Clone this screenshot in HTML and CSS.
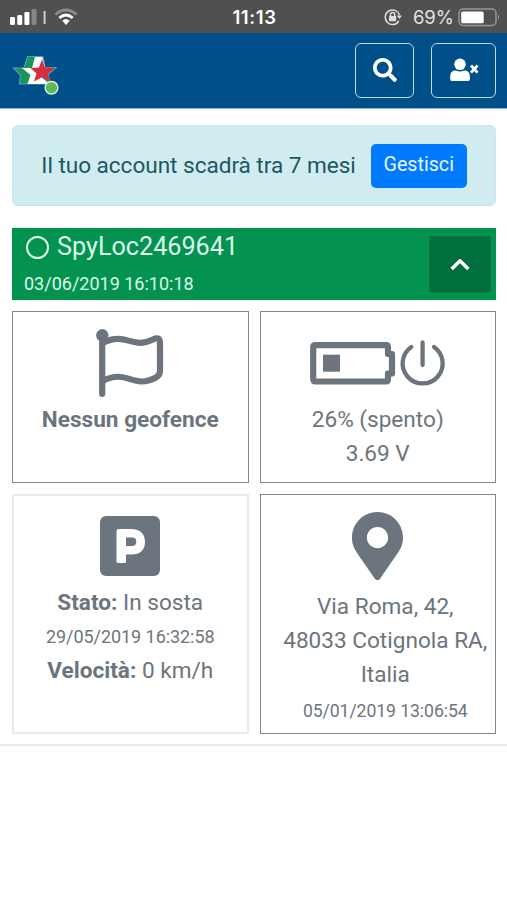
FILE: index.html
```html
<!DOCTYPE html>
<html lang="it">
<head>
<meta charset="utf-8">
<meta name="viewport" content="width=device-width, initial-scale=1">
<title>SpyLoc</title>
<link rel="stylesheet" href="styles.css">
</head>
<body>
<div class="status">
  <svg class="signal" width="68" height="18" viewBox="0 0 68 18" fill="#fff">
    <rect x="0" y="9" width="5" height="8" rx="1.2"/><rect x="7.2" y="7" width="5" height="10" rx="1.2"/><rect x="14.4" y="4" width="5" height="13" rx="1.2"/><rect x="21.6" y="1" width="5" height="16" rx="1.2" fill="#858585"/>
    <rect x="33.6" y="3" width="2" height="13" fill="#ccc"/>
    <g fill="none" stroke-width="2.8"><path d="M45.5 6.5Q56 -2.5 66.500 6.500" stroke="#8c8c8c"/><path d="M49.300 10Q56 4 62.700 10" stroke="#fff"/></g>
    <path d="M52.300 12.700Q56 9.500 59.700 12.700L56 17Z"/>
  </svg>
  <span class="clock">11:13</span>
  <div class="status-right">
    <svg width="19" height="18" viewBox="0 0 19 18" fill="none" stroke="#ddd" stroke-width="1.500"><path d="M14.800 13A7.300 7.300 0 1 1 15.500 7"/><path d="M12.800 7.500H18L15.500 11Z" fill="#ddd" stroke="none"/><rect x="5" y="8" width="7.200" height="5.200" rx=".6" fill="#ddd" stroke="none"/><path d="M6.500 8V6.500a2.100 2.100 0 0 1 4.200 0V8"/></svg>
    <span class="percent">69%</span>
    <svg width="43" height="19" viewBox="0 0 43 19"><rect x="1" y="1" width="37" height="16.500" rx="4" fill="none" stroke="#969696" stroke-width="1.500"/><rect x="3.200" y="3.400" width="22.500" height="11.800" rx="1.500" fill="#fff"/><path d="M40 6.500q2.500 2.700 0 5.500z" fill="#969696"/></svg>
  </div>
</div>
<header class="navbar">
  <svg class="logo" width="48" height="44" viewBox="0 0 48 44">
    <path d="M15.500 3.500H30.800L33 14.500H44L36 21.500L38.500 31H7.500L8.500 22L1.500 15H12Z" fill="#16965b" stroke="#5a9cb1" stroke-width="1.200"/>
    <path d="M23 4H30.300L33 14L25 31H15.500L18.500 22L10 15H20Z" fill="#fff"/>
    <path d="M29 24L38 31H22Z" fill="#fff"/>
    <path d="M30 6.300L33 14.500L43 15L35.700 20.500L38 28.500L30 24.300L22 28.500L24.500 20.500L18.500 15L27 14.500Z" fill="#d92b42"/>
    <circle cx="39.500" cy="34.700" r="6.400" fill="#5cba57" stroke="#e9f5ed" stroke-width="1.300"/>
  </svg>
  <div class="nav-actions">
    <button class="nav-btn search" aria-label="Cerca"><svg width="24" height="24" viewBox="0 0 512 512" fill="#fff"><path d="M505 442.700L405.300 343c-4.500-4.500-10.600-7-17-7H372c27.600-35.300 44-79.700 44-128C416 93.100 322.900 0 208 0S0 93.100 0 208s93.100 208 208 208c48.300 0 92.700-16.400 128-44v16.300c0 6.400 2.500 12.500 7 17l99.700 99.700c9.400 9.400 24.600 9.400 33.900 0l28.300-28.300c9.400-9.400 9.400-24.600.1-34zM208 336c-70.700 0-128-57.200-128-128 0-70.700 57.200-128 128-128 70.700 0 128 57.200 128 128 0 70.700-57.200 128-128 128z"/></svg></button>
    <button class="nav-btn user" aria-label="Esci"><svg width="30" height="24" viewBox="0 0 30 24" fill="#fff"><circle cx="11" cy="6.300" r="5.800"/><path d="M1.200 21V18.500Q1.200 12.600 7 12.600Q11 14.600 15 12.600Q20.900 12.600 20.900 18.500V21Q20.900 23 19 23H3Q1.200 23 1.200 21Z"/><path d="M22 7.500L28.500 14.700M28.500 7.500L22 14.700" stroke="#fff" stroke-width="2.700"/></svg></button>
  </div>
</header>
<main>
  <section class="alert"><span>Il tuo account scadrà tra 7 mesi</span><button class="manage">Gestisci</button></section>
  <section class="device">
    <div class="device-info">
      <h1><i class="ring"></i>SpyLoc2469641</h1>
      <p>03/06/2019 16:10:18</p>
    </div>
    <button class="toggle" aria-label="Comprimi"><svg width="20" height="13" viewBox="0 0 20 13" fill="none" stroke="#fff" stroke-width="3.400"><path d="M1.700 11L10 2.800L18.300 11" stroke-linejoin="round"/></svg></button>
  </section>
  <section class="cards">
    <article class="card">
      <div class="icon flag"><svg width="68" height="68" viewBox="0 0 68 68"><circle cx="6.300" cy="6.300" r="6.200" fill="#6c757d"/><path d="M6.200 6V65" stroke="#6c757d" stroke-width="6.200" stroke-linecap="round"/><path d="M6.300 14C31 2 35 21 57 10.500Q64 7 64 14V42Q64 46 60 48.500C36 61 32 39 6.300 52" fill="none" stroke="#6c757d" stroke-width="6.200"/></svg></div>
      <b>Nessun geofence</b>
    </article>
    <article class="card">
      <div class="icon battery"><svg width="136" height="47" viewBox="0 0 136 47" fill="none" stroke="#6c757d"><path d="M5.500 5.200H76Q78 5.200 78 7.500V14H82V33.500H78V39Q78 41.500 76 41.500H5.500Q3.200 41.500 3.200 39V7.500Q3.200 5.200 5.500 5.200Z" stroke-width="6.200" stroke-linejoin="round"/><path d="M13 14.700h17v17h-17z" fill="#6c757d" stroke="none"/><path d="M101.300 7A20 20 0 1 0 124 7M112.600 2.500V25" stroke-width="4.300" stroke-linecap="round"/></svg></div>
      <span>26% (spento)</span>
      <span>3.69 V</span>
    </article>
    <article class="card muted">
      <div class="icon parking"><svg width="60" height="60" viewBox="0 0 60 60"><rect width="60" height="60" rx="6" fill="#6c757d"/><path fill-rule="evenodd" d="M18.500 13H31.500C40 13 45 18 45 26S40 38.500 31.500 38.500H26V45.500Q26 47 24.500 47H18Q16.500 47 16.500 45.500V15Q16.500 13 18.500 13ZM26 21.500V30H32Q36.300 30 36.300 25.700Q36.300 21.500 32 21.500Z" fill="#fff"/></svg></div>
      <span><b>Stato:</b> In sosta</span>
      <small>29/05/2019 16:32:58</small>
      <span><b>Velocità:</b> 0 km/h</span>
    </article>
    <article class="card address">
      <div class="icon pin"><svg width="51" height="68" viewBox="0 0 384 512" fill="#6c757d"><path d="M172.268 501.670C26.970 291.031 0 269.413 0 192 0 85.961 85.961 0 192 0s192 85.961 192 192c0 77.413-26.970 99.031-172.268 309.670-9.535 13.774-29.930 13.773-39.464 0zM192 272c44.183 0 80-35.817 80-80s-35.817-80-80-80-80 35.817-80 80 35.817 80 80 80z"/></svg></div>
      <span>Via Roma, 42,<br>48033 Cotignola RA,<br>Italia</span>
      <small>05/01/2019 13:06:54</small>
    </article>
  </section>
</main>
</body>
</html>
```

FILE: styles.css
```css
* { box-sizing: border-box; }
body { margin: 0; background: #fff; font-family: Roboto, sans-serif; font-size: 22.6px; line-height: 34.2px; color: #6c757d; }
button { font: inherit; padding: 0; display: flex; align-items: center; justify-content: center; }
svg { display: block; flex: none; }
.status { height: 33px; background: #505050; display: grid; grid-template-columns: 1fr auto 1fr; align-items: center; padding: 1px 8px 0 10px; color: #fff; font-family: Inter, sans-serif; font-size: 18.5px; line-height: 32px; }
.clock { font-weight: 600; letter-spacing: .6px; }
.status-right { display: flex; justify-content: flex-end; align-items: center; }
.percent { color: #e2e2e2; margin: 0 4px 0 10px; }
.status-right { margin-right: -2px; }
.navbar { height: 76px; background: #004f89; border-bottom: 1px solid #8fb1ca; display: flex; justify-content: space-between; padding: 10px 11px 0 12px; }
.logo { margin-top: 10px; }
.nav-actions { display: flex; gap: 17px; }
.nav-btn { height: 55px; background: transparent; border: 1.500px solid #b9dcf4; border-radius: 6px; }
.search { width: 59px; padding-bottom: 2px; }
.user { width: 65px; padding-bottom: 2px; }
main { padding: 16px 11px 0 12px; border-bottom: 2px solid #e9eaec; height: 637px; }
.alert { height: 81px; border: 1px solid #c5e8ed; border-radius: 6px; background: #d0ecf0; color: #1c5862; display: flex; align-items: center; justify-content: center; gap: 15px; }
.alert span { padding-top: 2px; letter-spacing: -.04px; }
.manage { width: 96px; height: 44px; background: #007bff; border: 0; border-radius: 5px; color: #e8f4ff; font-size: 19.700px; }
.device { margin-top: 22px; height: 72px; background: #049251; color: #dcf8e9; display: flex; justify-content: space-between; }
.device-info { padding: 4px 0 0 12px; }
h1 { margin: 0; font-size: 25.200px; font-weight: 400; line-height: 30px; display: flex; align-items: center; }
.ring { width: 23px; height: 23px; border: 2.500px solid #dcf8e9; border-radius: 50%; margin: 0 8px 0 2px; }
.device p { margin: 8px 0 0; font-size: 18px; line-height: 27px; }
.toggle { width: 62px; height: 57px; margin: 8px 5px 0 0; background: #006f3d; border: 1px solid #087945; border-radius: 2px; }
.cards { margin-top: 11px; display: grid; grid-template-columns: 1fr 1fr; grid-template-rows: 172px 240px; gap: 11px; }
.card { border: 1.500px solid #7f8588; display: flex; flex-direction: column; align-items: center; text-align: center; white-space: nowrap; }
.muted { border: 2px solid #e9eaec; }
.icon { height: 91px; display: flex; flex: none; }
.flag { padding-top: 17px; }
.battery { padding-top: 28px; }
.parking { padding-top: 20px; height: 90px; }
.pin { height: 95px; padding-top: 17px; }
.muted small { line-height: 34px; }
.address > span { padding-left: 15px; }
.address small { padding-left: 15px; line-height: 36px; }
small { font-size: 18px; letter-spacing: -.06px; }
.address small { font-size: 17.600px; }
```
